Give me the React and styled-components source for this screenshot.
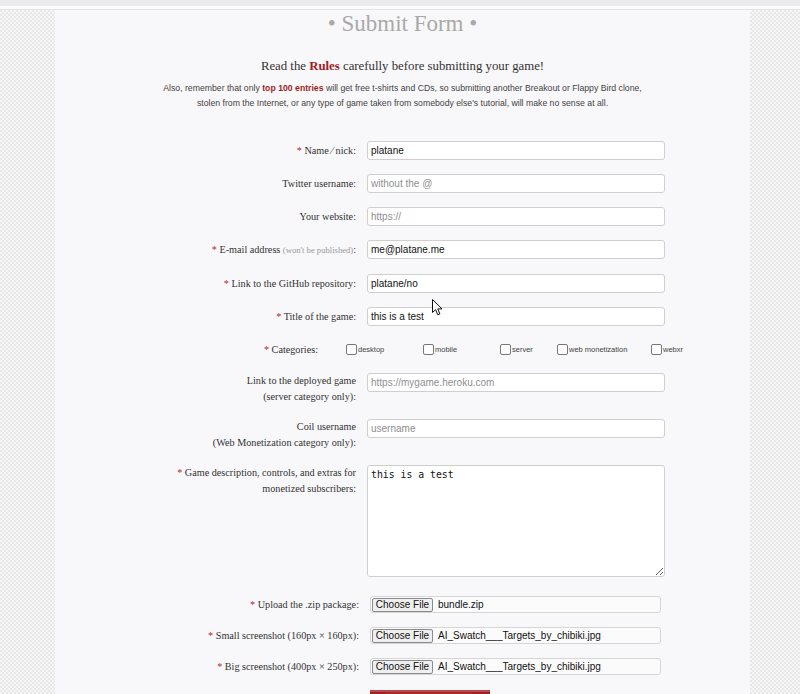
import React from "react";
import styled, { createGlobalStyle } from "styled-components";

const GlobalStyle = createGlobalStyle`
  html, body {
    margin: 0;
    padding: 0;
  }
  body {
    background: repeating-conic-gradient(#e8e8e8 0 25%, #f6f6f6 0 50%) 0 0 / 4px 4px;
    font-family: "Liberation Serif", serif;
    color: #333;
  }
`;

const TopStrip = styled.div`
  height: 6px;
  background: #ebebee;
  border-bottom: 3px solid #fbfbfc;
  box-shadow: 0 1px 0 #e4e4e6;
`;

const Page = styled.main`
  position: relative;
  margin: 1px 50px 0 55px;
  background: #f8f7f9;
  padding: 0 0 30px;
  min-height: 700px;
`;

const Title = styled.h1`
  margin: 0;
  text-align: center;
  font-family: "Liberation Serif", serif;
  font-weight: normal;
  font-size: 23px;
  line-height: 28px;
  color: #a9a9a9;
`;

const Lead = styled.h2`
  margin: 19px 0 0;
  text-align: center;
  font-family: "Liberation Serif", serif;
  font-weight: normal;
  font-size: 12.8px;
  line-height: 18px;
  color: #333;
`;

const Note = styled.p`
  margin: 6px 0 0;
  text-align: center;
  font-family: "Liberation Sans", sans-serif;
  font-size: 8.7px;
  line-height: 15px;
  color: #444;
`;

const Red = styled.strong`
  color: #a11d22;
  font-weight: bold;
`;

const Form = styled.form`
  display: flex;
  flex-direction: column;
  gap: 14px;
  margin-top: 30px;
`;

const Row = styled.div`
  display: grid;
  grid-template-columns: ${(p) => (p.$labelWidth || 301) + "px"} auto;
  column-gap: ${(p) => (p.$gap || 11) + "px"};
  align-items: start;
  margin-top: ${(p) => (p.$extra || 0) + "px"};
`;

const Label = styled.label`
  text-align: right;
  font-size: 10.2px;
  line-height: ${(p) => (p.$multi ? "16px" : p.$file ? "17px" : "19px")};
  color: #333;
`;

const Star = styled.span`
  color: #b22a2a;
`;

const Hint = styled.span`
  font-size: 8.6px;
  color: #999;
`;

const TextInput = styled.input`
  box-sizing: border-box;
  width: 298px;
  height: 19px;
  margin: 0;
  padding: 0 3px;
  border: 1px solid #cfcfcf;
  border-radius: 3px;
  background: #fff;
  font-family: "Liberation Sans", Arial, sans-serif;
  font-size: 10px;
  color: #111;
  outline: none;
  &::placeholder {
    color: #8f8f8f;
  }
`;

const TextArea = styled.textarea`
  box-sizing: border-box;
  width: 298px;
  height: 112px;
  margin: 0;
  padding: 2px 3px;
  border: 1px solid #cfcfcf;
  border-radius: 3px;
  background: #fff;
  font-family: "DejaVu Sans Mono", monospace;
  font-size: 9.8px;
  line-height: 14px;
  color: #111;
  resize: vertical;
  outline: none;
`;

const Checks = styled.div`
  display: grid;
  grid-template-columns: 77px 77px 57px 94px auto;
  align-items: center;
  height: 19px;
`;

const CheckItem = styled.label`
  display: flex;
  align-items: center;
  font-family: "Liberation Sans", sans-serif;
  font-size: 7.5px;
  color: #444;
  white-space: nowrap;
`;

const Box = styled.span`
  box-sizing: border-box;
  width: 11px;
  height: 11px;
  border: 1px solid #777;
  border-radius: 2px;
  background: #fff;
  margin-right: 1px;
`;

const FileBox = styled.div`
  box-sizing: border-box;
  display: flex;
  align-items: center;
  gap: 5px;
  width: 291px;
  height: 17px;
  padding: 0 1px;
  border: 1px solid #d6d6d6;
  border-radius: 3px;
  background: #fbfbfc;
  font-family: "Liberation Sans", Arial, sans-serif;
  font-size: 10px;
  color: #111;
`;

const ChooseButton = styled.span`
  box-sizing: border-box;
  display: inline-flex;
  align-items: center;
  justify-content: center;
  width: 61px;
  height: 14px;
  border: 1px solid #8a8a8a;
  border-radius: 2px;
  background: #efefef;
  font-size: 10px;
  color: #111;
`;

const SubmitRow = styled.div`
  display: flex;
  padding-left: 315px;
  margin-top: 1px;
`;

const SubmitButton = styled.button`
  width: 120px;
  height: 44px;
  padding-top: 14px;
  border: 0;
  border-top: 2px solid #b9484b;
  background: linear-gradient(#a72c30, #8f2226);
  box-shadow: inset 16px 0 0 #9a2629, inset -18px 0 0 #9a2629;
  color: #fff;
  font-family: "Liberation Serif", serif;
  font-size: 13px;
`;

const Cursor = styled.svg`
  position: absolute;
  left: 377px;
  top: 289px;
  width: 11px;
  height: 17px;
  pointer-events: none;
`;

const TextRow = ({ label, required, hint, placeholder, value }) => (
  <Row>
    <Label>
      {required && <Star>* </Star>}
      {label}
      {hint && (
        <>
          {" "}
          <Hint>{hint}</Hint>
        </>
      )}
      :
    </Label>
    <TextInput placeholder={placeholder} defaultValue={value} />
  </Row>
);

const FileRow = ({ label, file, extra }) => (
  <Row $labelWidth={304} $extra={extra}>
    <Label $file>
      <Star>* </Star>
      {label}:
    </Label>
    <FileBox>
      <ChooseButton>Choose File</ChooseButton>
      <span>{file}</span>
    </FileBox>
  </Row>
);

const categories = ["desktop", "mobile", "server", "web monetization", "webxr"];

export default function App() {
  return (
    <>
      <GlobalStyle />
      <TopStrip />
      <Page>
        <Title>• Submit Form •</Title>
        <Lead>
          Read the <Red>Rules</Red> carefully before submitting your game!
        </Lead>
        <Note>
          Also, remember that only <Red>top 100 entries</Red> will get free
          t-shirts and CDs, so submitting another Breakout or Flappy Bird clone,
          <br />
          stolen from the Internet, or any type of game taken from somebody
          else's tutorial, will make no sense at all.
        </Note>

        <Form onSubmit={(e) => e.preventDefault()}>
          <TextRow required label="Name ⁄ nick" value="platane" />
          <TextRow label="Twitter username" placeholder="without the @" />
          <TextRow label="Your website" placeholder="https://" />
          <TextRow
            required
            label="E-mail address"
            hint="(won't be published)"
            value="me@platane.me"
          />
          <TextRow required label="Link to the GitHub repository" value="platane/no" />
          <TextRow required label="Title of the game" value="this is a test" />

          <Row $labelWidth={263} $gap={28}>
            <Label>
              <Star>* </Star>Categories:
            </Label>
            <Checks>
              {categories.map((c) => (
                <CheckItem key={c}>
                  <Box />
                  {c}
                </CheckItem>
              ))}
            </Checks>
          </Row>

          <Row>
            <Label $multi>
              Link to the deployed game
              <br />
              (server category only):
            </Label>
            <TextInput placeholder="https://mygame.heroku.com" />
          </Row>

          <Row>
            <Label $multi>
              Coil username
              <br />
              (Web Monetization category only):
            </Label>
            <TextInput placeholder="username" />
          </Row>

          <Row>
            <Label $multi>
              <Star>* </Star>Game description, controls, and extras for
              <br />
              monetized subscribers:
            </Label>
            <TextArea defaultValue="this is a test" />
          </Row>

          <FileRow extra={5} label="Upload the .zip package" file="bundle.zip" />
          <FileRow
            label="Small screenshot (160px × 160px)"
            file="AI_Swatch___Targets_by_chibiki.jpg"
          />
          <FileRow
            label="Big screenshot (400px × 250px)"
            file="AI_Swatch___Targets_by_chibiki.jpg"
          />

          <SubmitRow>
            <SubmitButton type="submit">Submit</SubmitButton>
          </SubmitRow>
        </Form>

        <Cursor viewBox="0 0 11 17">
          <path
            d="M0.5 0.5 L0.5 13.5 L3.6 10.6 L5.8 15.8 L7.9 14.9 L5.8 9.9 L10 9.9 Z"
            fill="#fff"
            stroke="#111"
            strokeWidth="1"
            strokeLinejoin="round"
          />
        </Cursor>
      </Page>
    </>
  );
}
